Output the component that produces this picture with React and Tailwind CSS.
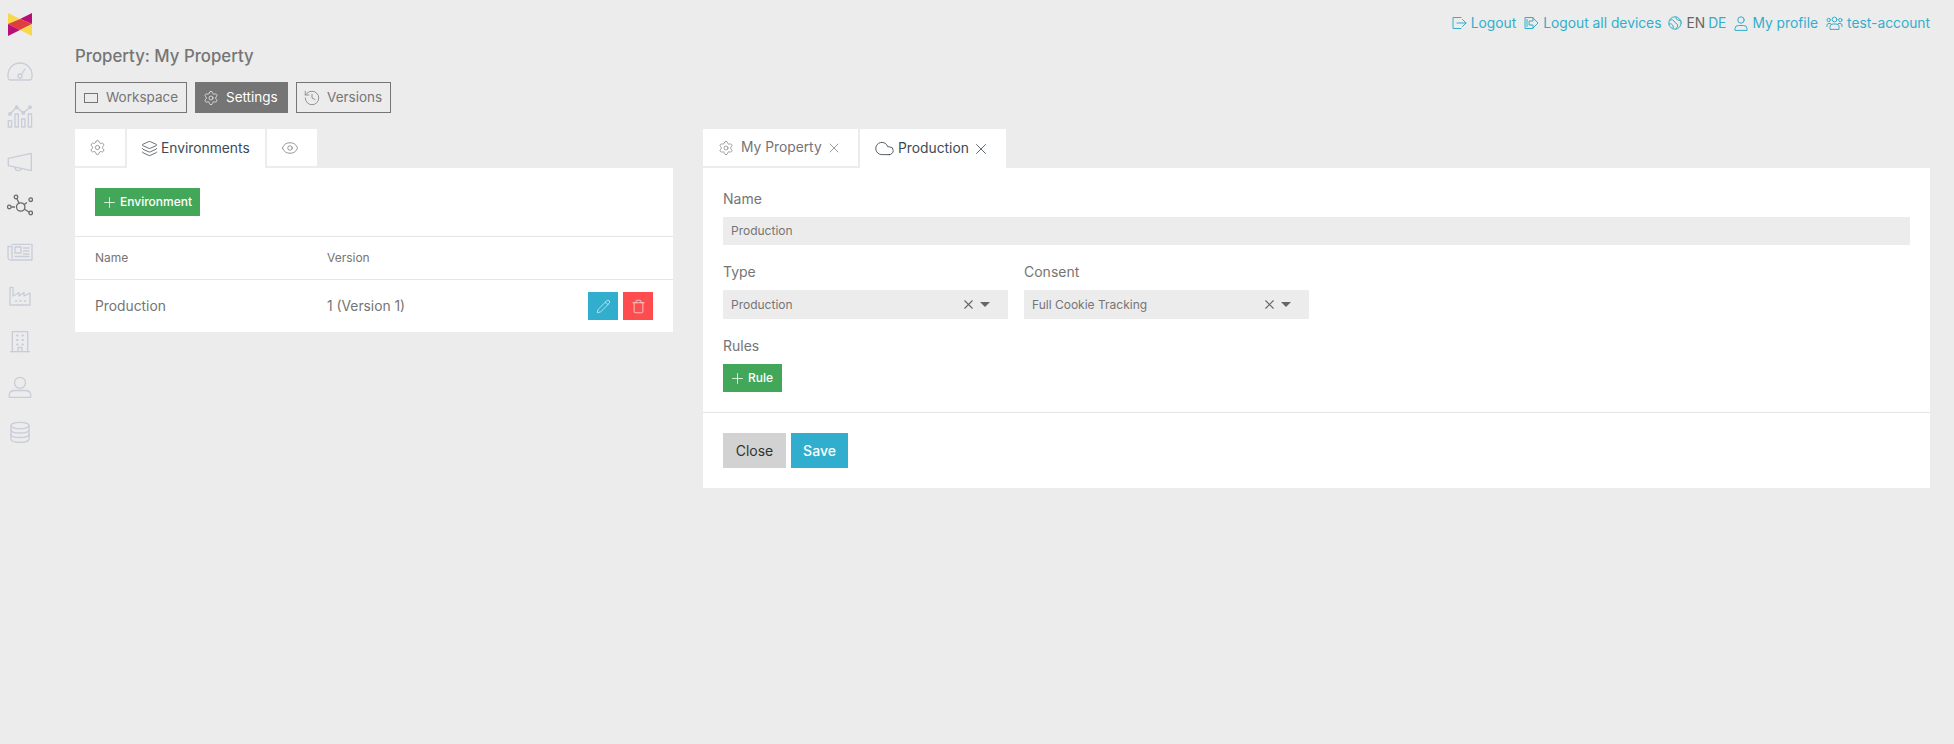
import React from "react";
import { Settings, Layers, Eye, Pencil, Trash, Plus, X, Cloud, History } from "lucide-react";

const SideIcon = ({ children, active }) => (
	<div className={"h-[45px] flex items-center justify-center " + (active ? "text-[#6b6b6b]" : "text-[#c9ccd9]")}>
		<svg width="26" height="26" viewBox="0 0 26 26" fill="none" stroke="currentColor" strokeWidth="1.3" strokeLinecap="round" strokeLinejoin="round">
			{children}
		</svg>
	</div>
);

const Logo = () => (
	<svg width="24" height="23" viewBox="0 0 24 23" className="block">
		<polygon points="0,0 12,6 0,11" fill="#f6d84a" />
		<polygon points="24,0 12,6 24,11" fill="#b90f74" />
		<polygon points="0,11 12,6 24,11 12,17" fill="#de3f3c" />
		<polygon points="0,11 12,17 0,23" fill="#b90f74" />
		<polygon points="24,11 12,17 24,23" fill="#f6d84a" />
	</svg>
);

const Sidebar = () => (
	<div className="w-[40px] shrink-0">
		<div className="pt-[13px] pl-[8px] h-[49px]">
			<Logo />
		</div>
		<SideIcon>
			<path d="M1 16 a12 12 0 0 1 24 0 v2 q0 3 -3 3 H4 q-3 0 -3 -3 z" />
			<circle cx="13" cy="17" r="2" />
			<path d="M14.5 15.5 L18 10" />
		</SideIcon>
		<SideIcon>
			<rect x="1.3" y="16.7" width="3.3" height="6.3" />
			<rect x="8" y="10" width="3.3" height="13" />
			<rect x="14.6" y="15" width="3.4" height="8" />
			<rect x="21.3" y="10" width="3.3" height="13" />
			<path d="M3 10 L9.6 3.3 L16.3 9 L23 3.3" />
			<circle cx="3" cy="10" r="1.3" />
			<circle cx="9.6" cy="3.3" r="1.3" />
			<circle cx="16.3" cy="9" r="1.3" />
			<circle cx="23" cy="3.3" r="1.3" />
		</SideIcon>
		<SideIcon>
			<path d="M1.3 9.3 L24.3 4.3 V21.7 L1.3 16.7 Z" />
			<path d="M8 18.5 a3.4 3.2 0 0 0 6.5 1.2" />
		</SideIcon>
		<SideIcon active>
			<circle cx="13.7" cy="13" r="4.2" />
			<circle cx="9" cy="3" r="1.8" />
			<circle cx="23.7" cy="5.7" r="1.8" />
			<circle cx="2.3" cy="13" r="1.8" />
			<circle cx="23.7" cy="19" r="1.8" />
			<path d="M10 5 L12 9 M17.3 10.5 L19.5 8.8 M4.8 13 H7.5 M17.5 15.2 L22 18" />
		</SideIcon>
		<SideIcon>
			<path d="M5 5.3 H25 V21 H4 Q1 21 1 18.5 V7.5 H5 V19" />
			<rect x="8" y="8" width="6" height="6" />
			<path d="M16.5 9 H22 M16.5 12 H22 M16.5 15 H22 M8 17.5 H22" />
		</SideIcon>
		<SideIcon>
			<path d="M3 21 V3.3 H6 V12 L12 8.5 V12 L17 8.5 V12 L23 9 V21 Z" />
			<path d="M8.5 17 H9.5 M13 17 H14 M17.5 17 H18.5" strokeWidth="1.6" />
		</SideIcon>
		<SideIcon>
			<path d="M5.3 22.7 V2.7 H20.7 V22.7" />
			<path d="M3.5 22.7 H22.5" />
			<path d="M11 22.7 V18.5 H15 V22.7" />
			<path d="M10 6.5 H10.6 M15.4 6.5 H16 M10 11 H10.6 M15.4 11 H16 M10 15.5 H10.6 M15.4 15.5 H16" strokeWidth="1.9" />
		</SideIcon>
		<SideIcon>
			<circle cx="13" cy="8.8" r="5.5" />
			<path d="M2.3 23.3 V21 Q2.3 16.5 8 16.5 H18 Q23.7 16.5 23.7 21 V23.3 Z" />
		</SideIcon>
		<SideIcon>
			<ellipse cx="13" cy="6.5" rx="9" ry="3.2" />
			<path d="M4 6.5 V20 C4 24.5 22 24.5 22 20 V6.5" />
			<path d="M4 11 C4 15 22 15 22 11 M4 15.5 C4 19.5 22 19.5 22 15.5" />
		</SideIcon>
	</div>
);

const TopIcon = ({ w, h, children }) => (
	<svg width={w} height={h} viewBox={"0 0 " + w + " " + h} fill="none" stroke="currentColor" strokeWidth="1" strokeLinecap="round" strokeLinejoin="round">
		{children}
	</svg>
);

const TopLink = ({ icon, className, children }) => (
	<span className={"inline-flex items-center gap-[4px] text-[#31aecd] " + className}>
		{icon}
		{children}
	</span>
);

const TopBar = () => (
	<div className="flex justify-end items-center gap-[8px] h-[18px] mt-[14px] text-[13.8px] leading-[18px]">
		<TopLink icon={
			<TopIcon w={15} h={14}>
				<path d="M9 1.5 H1 V12.5 H9 M5 7 H14 M10.5 3.5 L14 7 L10.5 10.5" />
			</TopIcon>
		}>Logout</TopLink>
		<TopLink icon={
			<TopIcon w={15} h={14}>
				<path d="M9 1.5 H1 V12.5 H9 M3 3.5 V10.5" />
				<path d="M5.5 5 H9 V2 L14 7 L9 12 V9 H5.5 Z" />
			</TopIcon>
		}>Logout all devices</TopLink>
		<span className="inline-flex items-center gap-[4px] -ml-[1px]">
			<span className="text-[#31aecd] flex">
				<TopIcon w={14} h={14}>
					<circle cx="7" cy="7" r="6.2" />
					<path d="M2 4 Q5 3 6 5 T9 8 T8 13 M8 1 Q7 3 10 4 T13 5 M1 8 Q4 7 5 10 T5 12" />
				</TopIcon>
			</span>
			<span className="text-[#666666]">EN</span>
			<span className="text-[#31aecd] -ml-[1px]">DE</span>
		</span>
		<TopLink icon={
			<TopIcon w={14} h={15}>
				<circle cx="7" cy="4" r="3.2" />
				<path d="M1 14 V12.5 Q1 9.5 4.5 9.5 H9.5 Q13 9.5 13 12.5 V14 Z" />
			</TopIcon>
		}>My profile</TopLink>
		<TopLink icon={
			<TopIcon w={17} h={14}>
				<circle cx="8.5" cy="3.5" r="2.4" />
				<circle cx="2.7" cy="4" r="1.7" />
				<circle cx="14.3" cy="4" r="1.7" />
				<path d="M4 13 V10.5 Q4 8 7 8 H10 Q13 8 13 10.5 V13 Z" />
				<path d="M1 10.5 V9 Q1 7.5 3 7.5 H4.5 M16 10.5 V9 Q16 7.5 14 7.5 H12.5" />
			</TopIcon>
		}>test-account</TopLink>
	</div>
);

const ViewButton = ({ icon, active, className, children }) => (
	<button className={"h-[31px] flex items-center text-[13.5px] border border-[#757575] " + (active ? "bg-[#757575] text-white " : "text-[#757575] ") + className}>
		{icon}
		{children}
	</button>
);

const Tab = ({ active, className, children }) => (
	<div className={"flex items-center bg-white text-[13.8px] " + (active ? "h-[39px] text-[#3d4a55] " : "h-[37px] text-[#757575] ") + className}>
		{children}
	</div>
);

const GreenButton = ({ className, children }) => (
	<button className={"h-[28px] flex items-center pl-[6px] bg-[#43a75a] text-white text-[12px] font-medium " + className}>
		<Plus size={17} strokeWidth={1.1} className="mr-[2px]" />
		{children}
	</button>
);

const Label = ({ children }) => <div className="text-[14px] leading-[18px] text-[#757575]">{children}</div>;

const SelectBox = ({ children }) => (
	<div className="w-[285px] h-[29px] pl-[8px] pr-[18px] flex items-center bg-[#ececec] text-[12px] text-[#757575]">
		<span className="flex-1">{children}</span>
		<X size={15} strokeWidth={1.75} className="text-[#666666] mr-[4px]" />
		<span className="w-0 h-0 border-x-[5px] border-x-transparent border-t-[5px] border-t-[#666666]"></span>
	</div>
);

const LeftPanel = () => (
	<div className="w-[598px] shrink-0">
		<div className="flex items-start gap-[2px]">
			<Tab className="w-[50px] pl-[14px]"><Settings size={17} strokeWidth={1} /></Tab>
			<Tab active className="w-[138px] pl-[14px] gap-[3px]"><Layers size={17} strokeWidth={1.1} />Environments</Tab>
			<Tab className="w-[50px] pl-[14px]"><Eye size={18} strokeWidth={1} /></Tab>
		</div>
		<div className="bg-white">
			<div className="px-[20px] pt-[20px] border-b border-[#e6e6e6] h-[69px]">
				<GreenButton className="w-[105px]">Environment</GreenButton>
			</div>
			<div className="h-[43px] flex items-center px-[20px] text-[12px] text-[#757575] border-b border-[#e6e6e6]">
				<span className="w-[232px]">Name</span>
				<span>Version</span>
			</div>
			<div className="h-[52px] flex items-center px-[20px] text-[13.8px] text-[#757575]">
				<span className="w-[232px]">Production</span>
				<span className="flex-1">1 (Version 1)</span>
				<div className="flex gap-[5px]">
					<button className="w-[30px] h-[28px] flex items-center justify-center bg-[#31aecd] text-white"><Pencil size={15} strokeWidth={1} /></button>
					<button className="w-[30px] h-[28px] flex items-center justify-center bg-[#ff4d4f] text-white"><Trash size={15} strokeWidth={1} /></button>
				</div>
			</div>
		</div>
	</div>
);

const RightPanel = () => (
	<div className="flex-1">
		<div className="flex items-start gap-[2px]">
			<Tab className="w-[155px] pl-[15px]">
				<Settings size={16} strokeWidth={1} />
				<span className="ml-[7px]">My Property</span>
				<X size={16} strokeWidth={1.1} className="ml-[4px]" />
			</Tab>
			<Tab active className="w-[146px] pl-[14px]">
				<Cloud size={21} strokeWidth={1} />
				<span className="ml-[3px]">Production</span>
				<X size={18} strokeWidth={1.1} className="ml-[3px]" />
			</Tab>
		</div>
		<div className="bg-white h-[320px]">
			<div className="px-[20px] pt-[22px] h-[245px] border-b border-[#e6e6e6]">
				<Label>Name</Label>
				<div className="mt-[9px] h-[28px] pl-[8px] flex items-center bg-[#ececec] text-[12px] text-[#757575]">Production</div>
				<div className="flex gap-[16px] mt-[18px]">
					<div>
						<Label>Type</Label>
						<div className="mt-[9px]"><SelectBox>Production</SelectBox></div>
					</div>
					<div>
						<Label>Consent</Label>
						<div className="mt-[9px]"><SelectBox>Full Cookie Tracking</SelectBox></div>
					</div>
				</div>
				<div className="mt-[18px]"><Label>Rules</Label></div>
				<GreenButton className="mt-[9px] w-[59px]">Rule</GreenButton>
			</div>
			<div className="px-[20px] pt-[20px] flex gap-[5px] text-[14px]">
				<button className="w-[63px] h-[35px] bg-[#d2d2d2] text-[#333333]">Close</button>
				<button className="w-[57px] h-[35px] bg-[#31aecd] text-white font-medium">Save</button>
			</div>
		</div>
	</div>
);

export default function App() {
	return (
		<div className="min-h-screen bg-[#ececec] flex font-['Inter',sans-serif]">
			<Sidebar />
			<div className="flex-1 pl-[35px] pr-[24px]">
				<TopBar />
				<h1 className="mt-[14px] text-[16.8px] leading-[20px] font-medium text-[#757575]">Property: My Property</h1>
				<div className="flex gap-[8px] mt-[16px]">
					<ViewButton className="w-[112px] pl-[8px]" icon={<span className="w-[14px] h-[10px] mr-[8px] border border-[#757575]"></span>}>Workspace</ViewButton>
					<ViewButton active className="w-[93px] pl-[7px]" icon={<Settings size={16} strokeWidth={1} className="mr-[7px]" />}>Settings</ViewButton>
					<ViewButton className="w-[95px] pl-[6px]" icon={<History size={18} strokeWidth={1} className="mr-[6px]" />}>Versions</ViewButton>
				</div>
				<div className="flex gap-[30px] mt-[16px]">
					<LeftPanel />
					<RightPanel />
				</div>
			</div>
		</div>
	);
}
